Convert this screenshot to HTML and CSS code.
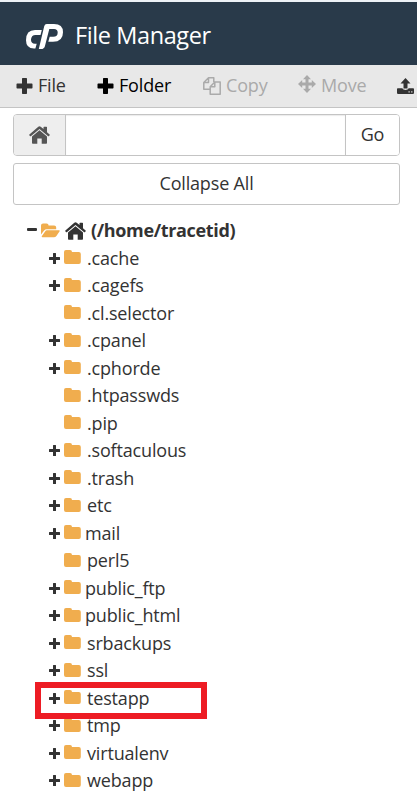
FILE: index.html
```html
<!DOCTYPE html>
<html lang="en">
<head>
<meta charset="utf-8">
<title>File Manager</title>
<link rel="stylesheet" href="styles.css">
</head>
<body>
<svg class="sprite" aria-hidden="true">
  <symbol id="plus" viewBox="0 0 16 16"><path d="M6.200 0h3.600q.7 0 .7.700v4.800h4.800q.7 0 .7.700v3.600q0 .7-.7.700h-4.800v4.800q0 .7-.7.700H6.200q-.7 0-.7-.7v-4.800H.7Q0 10.500 0 9.800V6.200q0-.7.700-.7h4.800V.7Q5.500 0 6.200 0z"/></symbol>
  <symbol id="smallplus" viewBox="0 0 11 11"><path d="M4.500 0h2q.5 0 .5.500V4h3.500q.5 0 .5.500v2q0 .5-.5.500H7v3.500q0 .5-.5.500h-2q-.5 0-.5-.5V7H.5Q0 7 0 6.500v-2Q0 4 .5 4H4V.5Q4 0 4.500 0z"/></symbol>
  <symbol id="folder" viewBox="0 0 17 14"><path d="M2 0h4q2 0 2 2h6.800q2 0 2 2v8q0 2-2 2H2q-2 0-2-2V2Q0 0 2 0z"/></symbol>
  <symbol id="open" viewBox="0 0 20 15"><path d="M0 12.400V2.200Q0 0 2.200 0h3.600Q8 0 8 2.200h5.800q2.200 0 2.200 2.200v1.800H6.200q-1.900 0-3.100 1.500L0 11.600z"/><path d="M6.300 7.200H19q1.400 0 .6 1.200l-3.400 4.900q-1 1.300-2.600 1.300H1.500q-1.300 0-.5-1.200l3.300-4.900q.8-1.300 2-1.300z"/></symbol>
  <symbol id="home" viewBox="0 0 21 18"><path d="M10.500 4.200 18 10.500V17q0 .8-.8.8h-4.500v-5.200H8.300v5.200H3.800q-.8 0-.8-.8v-6.500z"/><path d="M9.300.7q1.200-1 2.400 0l2.800 2.400V1.300q0-.6.6-.6h2.300q.6 0 .6.600v5l2.600 2.200q.4.400.1.800l-.7.800q-.4.400-.8.100L10.500 2.900 1.800 10.200q-.4.300-.8-.1l-.7-.8q-.3-.4.100-.8z"/></symbol>
</svg>

<header class="header">
  <svg class="logo" viewBox="0 0 37 25">
    <path d="M9 6h6.800l-1.300 5H9.400q-3.800 0-4.400 4.300-.2 4.400 4 4.400h1.700L9.400 24.500H8Q0 24.500 0 16.300 0 6 9 6z"/>
    <path d="M20.800 0H28q9 0 9 8.200 0 9.600-10 9.600h-4.700l1.400-5h3.500q4.500 0 4.500-4.300 0-3.500-3.700-3.500h-4.700l-4.400 17.200q-.8 2.800-3.800 2.800h-2.300L18.200 2.200Q18.800 0 20.800 0z"/>
  </svg>
  <h1>File Manager</h1>
</header>

<nav class="toolbar">
  <a class="tool file"><svg class="tplus"><use href="#plus"/></svg>File</a>
  <a class="tool newfolder"><svg class="tplus"><use href="#plus"/></svg>Folder</a>
  <a class="tool copy disabled"><svg class="copyicon" viewBox="0 0 18 18"><path d="M5.500 4V.8h5.300V5M5.500.8.8 5.500v6.700h6M.8 5.500h4.700V1M11.800 5h5.400v12.200H7.200V9.700zM7.200 9.700h4.600V5"/></svg>Copy</a>
  <a class="tool move disabled"><svg class="moveicon" viewBox="0 0 18 18"><path d="m9 0 4 4.200h-2.500v3.300h3.300V5L18 9l-4.200 4v-2.500h-3.300v3.300H13L9 18l-4-4.200h2.500v-3.300H4.200V13L0 9l4.200-4v2.500h3.300V4.200H5z"/></svg>Move</a>
  <a class="tool upload"><svg class="upicon" viewBox="0 0 17 16"><path d="m8.500 0 5 5.500h-3v5h-4v-5h-3z"/><path d="M.8 10.300h4.500q.7 1.700 3.200 1.700t3.200-1.700h4.500q.8 0 .8.800v4q0 .8-.8.800H.8q-.8 0-.8-.8v-4q0-.8.8-.8z"/><path class="lights" d="M11.500 13.300h1.200v1.200h-1.200zM14.200 13.300h1.200v1.200h-1.200z"/></svg></a>
</nav>

<main class="panel">
  <div class="address">
    <span class="addon"><svg><use href="#home"/></svg></span>
    <input type="text" aria-label="Path">
    <button>Go</button>
  </div>
  <button class="collapse">Collapse All</button>

  <div class="tree">
    <div class="row root"><i class="minus"></i><svg class="open"><use href="#open"/></svg><svg class="home"><use href="#home"/></svg><span>(/home/tracetid)</span></div>
    <div class="row"><svg class="plus"><use href="#smallplus"/></svg><svg class="folder"><use href="#folder"/></svg><span>.cache</span></div>
    <div class="row"><svg class="plus"><use href="#smallplus"/></svg><svg class="folder"><use href="#folder"/></svg><span>.cagefs</span></div>
    <div class="row leaf"><svg class="folder"><use href="#folder"/></svg><span>.cl.selector</span></div>
    <div class="row"><svg class="plus"><use href="#smallplus"/></svg><svg class="folder"><use href="#folder"/></svg><span>.cpanel</span></div>
    <div class="row"><svg class="plus"><use href="#smallplus"/></svg><svg class="folder"><use href="#folder"/></svg><span>.cphorde</span></div>
    <div class="row leaf"><svg class="folder"><use href="#folder"/></svg><span>.htpasswds</span></div>
    <div class="row leaf"><svg class="folder"><use href="#folder"/></svg><span>.pip</span></div>
    <div class="row"><svg class="plus"><use href="#smallplus"/></svg><svg class="folder"><use href="#folder"/></svg><span>.softaculous</span></div>
    <div class="row"><svg class="plus"><use href="#smallplus"/></svg><svg class="folder"><use href="#folder"/></svg><span>.trash</span></div>
    <div class="row"><svg class="plus"><use href="#smallplus"/></svg><svg class="folder"><use href="#folder"/></svg><span>etc</span></div>
    <div class="row tight"><svg class="plus"><use href="#smallplus"/></svg><svg class="folder"><use href="#folder"/></svg><span>mail</span></div>
    <div class="row leaf"><svg class="folder"><use href="#folder"/></svg><span>perl5</span></div>
    <div class="row tight"><svg class="plus"><use href="#smallplus"/></svg><svg class="folder"><use href="#folder"/></svg><span>public_ftp</span></div>
    <div class="row tight"><svg class="plus"><use href="#smallplus"/></svg><svg class="folder"><use href="#folder"/></svg><span>public_html</span></div>
    <div class="row"><svg class="plus"><use href="#smallplus"/></svg><svg class="folder"><use href="#folder"/></svg><span>srbackups</span></div>
    <div class="row"><svg class="plus"><use href="#smallplus"/></svg><svg class="folder"><use href="#folder"/></svg><span>ssl</span></div>
    <div class="row marked"><svg class="plus"><use href="#smallplus"/></svg><svg class="folder"><use href="#folder"/></svg><span>testapp</span></div>
    <div class="row"><svg class="plus"><use href="#smallplus"/></svg><svg class="folder"><use href="#folder"/></svg><span>tmp</span></div>
    <div class="row"><svg class="plus"><use href="#smallplus"/></svg><svg class="folder"><use href="#folder"/></svg><span>virtualenv</span></div>
    <div class="row"><svg class="plus"><use href="#smallplus"/></svg><svg class="folder"><use href="#folder"/></svg><span>webapp</span></div>
  </div>
</main>
</body>
</html>
```
FILE: styles.css
```css
*, *::after { box-sizing: border-box; }
body {
  margin: 0;
  height: 801px;
  overflow: hidden;
  background: #fff;
  color: #333;
  font: 18px/27.5px "Open Sans", sans-serif;
  letter-spacing: -0.17px;
}
svg { display: block; flex: none; fill: currentColor; }
.sprite { display: none; }

.header {
  display: flex;
  align-items: center;
  height: 65px;
  padding: 6px 0 0 26px;
  border-top: 2px solid #edf2f6;
  background: #293a4a;
  color: #fff;
}
.logo { width: 37px; height: 25px; margin-right: 12px; }
h1 { margin: -3px 0 0; font-size: 23.5px; font-weight: 400; line-height: 32px; letter-spacing: -0.4px; }

.toolbar {
  display: flex;
  height: 43px;
  padding-left: 16px;
  background: #e8e8e8;
  border-bottom: 1px solid #c4c4c4;
  overflow: hidden;
}
.tool { display: flex; align-items: center; flex: none; height: 41px; }
.tplus { width: 17px; height: 16px; margin-right: 5px; }
.file { width: 81px; }
.newfolder { width: 106px; color: #000; }
.copy { width: 95px; }
.move { width: 99px; }
.disabled { color: #aaa; }
.copyicon { width: 18px; height: 18px; margin-right: 5px; fill: none; stroke: currentColor; stroke-width: 1.500; stroke-linejoin: round; }
.moveicon { width: 18px; height: 18px; margin: -3px 5px 0 0; }
.upicon { width: 17px; height: 16px; }
.lights { fill: #e8e8e8; }

.panel { padding: 6px 17px 0 13px; }
.address {
  display: flex;
  height: 42px;
  border: 1px solid #c4c4c4;
  border-radius: 4px;
  overflow: hidden;
}
.addon {
  display: flex;
  align-items: center;
  justify-content: center;
  width: 51px;
  background: #eee;
  color: #555;
}
.addon svg { width: 21px; height: 18px; }
.address input {
  flex: 1;
  min-width: 0;
  padding: 0 12px;
  border: solid #c4c4c4;
  border-width: 0 1px;
  font: inherit;
  box-shadow: inset 0 1px 1px #ececec;
}
button { padding: 0; background: #fff; color: #333; font: inherit; letter-spacing: inherit; }
.address button { width: 53px; border: 0; }
.collapse {
  display: block;
  width: 100%;
  height: 42px;
  margin-top: 7px;
  border: 1px solid #c4c4c4;
  border-radius: 3px;
}

.tree { padding-top: 12px; }
.row { position: relative; display: flex; align-items: center; height: 27.5px; padding-left: 36px; }
.root { padding-left: 14px; font-weight: 700; letter-spacing: -0.35px; }
.minus { width: 10px; height: 3px; margin: -2px 4px 0 0; border-radius: 1px; background: #333; }
.open { width: 19px; height: 15px; margin-right: 5px; color: #f0ad4e; }
.home { width: 21px; height: 18px; margin-right: 5px; }
.plus { width: 11px; height: 11px; margin-right: 4px; }
.folder { width: 17px; height: 14px; margin: -2px 6px 0 0; color: #f0ad4e; }
.leaf { padding-left: 51px; }
.tight .folder { margin-right: 4px; }
.marked::after {
  content: "";
  position: absolute;
  z-index: 1;
  left: 22px;
  top: -3px;
  width: 172px;
  height: 37px;
  border: 6px solid #ed1c24;
}
```
